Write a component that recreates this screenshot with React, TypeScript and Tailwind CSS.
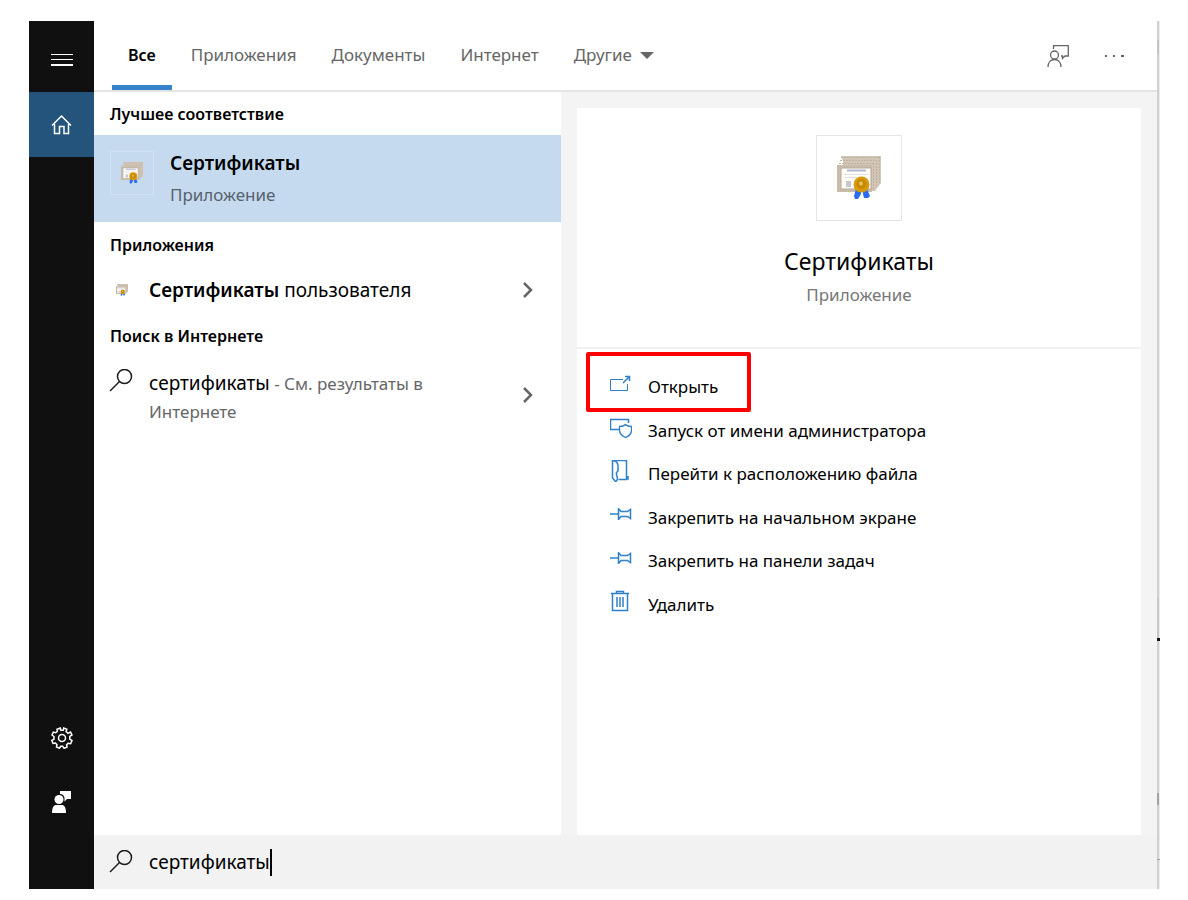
import type { ReactNode } from 'react';

const tabs = ['Все', 'Приложения', 'Документы', 'Интернет'];

function CertificateIcon({ className }: { className: string }) {
    return (
        <svg viewBox="0 0 44 44" className={className} aria-hidden="true">
            <path d="M4 0H44V27L38 35H6V5Z" fill="#d3c6b6" />
            <path
                d="M4 1.5H43M3 4.5H40M2 7.5H37M42.5 1V27M39.5 4V31M36.5 7V34"
                fill="none"
                stroke="#bfb2a2"
                strokeDasharray="2 1"
            />
            <path d="M0 9H35V36H0Z" fill="#cdbfae" />
            <path d="M1 10H34V35H1Z" fill="none" stroke="#bfb1a0" strokeDasharray="1 1" />
            <path d="M4 12H34V33H4Z" fill="#fdfcf7" stroke="#b5a896" />
            <path d="M10 14.5H29" stroke="#b4b6d8" strokeWidth="2" />
            <path d="M7 18.5H31M8 21.5H20" stroke="#dedee8" />
            <path d="M9 25H14V31H9Z" fill="#c6c6d0" />
            <path d="M19 33L17 40L18 43H21L24 38V34Z" fill="#2a6cf0" />
            <path d="M26 34V38L27 42H31L33 40L30 33Z" fill="#2a6cf0" />
            <circle cx="24.5" cy="28.5" r="8" fill="#d69a0a" />
            <circle cx="24.5" cy="28" r="5" fill="#c48a06" />
            <circle cx="24" cy="27.5" r="2" fill="#f0c250" />
        </svg>
    );
}

function SearchIcon() {
    return (
        <svg viewBox="0 0 24 24" className="size-6 shrink-0" fill="none" stroke="#1a1a1a" strokeWidth="1.5" aria-hidden="true">
            <circle cx="15.5" cy="7.5" r="7" />
            <path d="M10.5 12.500L1 22" />
        </svg>
    );
}

function ChevronIcon() {
    return (
        <svg viewBox="0 0 10 16" className="h-4 w-2.5" fill="none" stroke="#666" strokeWidth="2.5" aria-hidden="true">
            <path d="M1 1L8 8L1 15" />
        </svg>
    );
}

function ActionIcon({ children }: { children: ReactNode }) {
    return (
        <svg viewBox="0 0 22 22" className="mb-1.5 size-[22px] shrink-0" fill="none" stroke="#2f80c8" aria-hidden="true">
            {children}
        </svg>
    );
}

const pin = (
    <path d="M0 11H8M8.5 5V17M8.5 5.5L11 8.5H17.5L20.5 6.5V15.5L17.5 13.5H11L8.5 16.5" strokeWidth="1.5" />
);

const actions = [
    {
        label: 'Открыть',
        icon: (
            <>
                <path d="M13 6.5H.5V17.5H17.500V11" />
                <path d="M13 10L19 4M15 3.5H19.5V8" strokeWidth="1.5" />
            </>
        ),
    },
    {
        label: 'Запуск от имени администратора',
        icon: (
            <>
                <path d="M9 13.5H.5V3.5H18.5V7" strokeWidth="1.5" />
                <path
                    d="M15.5 8.5C14 10 12 10.5 9.500 10.500V14C9.500 18 13 20.500 15.500 21.500C18 20.500 21.500 18 21.500 14V10.500C19 10.500 17 10 15.500 8.500Z"
                    strokeWidth="1.3"
                />
            </>
        ),
    },
    {
        label: 'Перейти к расположению файла',
        icon: (
            <>
                <path d="M3 .5H16.500V19.500H8.500M16.500 19H18V16" strokeWidth="1.5" />
                <path d="M2.500 0V18L5.500 21.500C7.500 21 8 18 6.500 15V12.500L8 11V6C8 3 6 1 3 .5" strokeWidth="1.5" />
            </>
        ),
    },
    { label: 'Закрепить на начальном экране', icon: pin },
    { label: 'Закрепить на панели задач', icon: pin },
    {
        label: 'Удалить',
        icon: (
            <>
                <path d="M1 3.5H19M6.5 3V1.5H13.5V3" strokeWidth="1.5" />
                <path d="M2.5 4V20.500H17.5V4M7 7V17M10 7V17M13 7V17" strokeWidth="1.5" />
            </>
        ),
    },
];

function Sidebar() {
    return (
        <nav className="flex w-[65px] shrink-0 flex-col bg-[#101010] text-white">
            <button type="button" aria-label="Меню" className="flex h-[71px] items-center justify-center pt-1.5">
                <svg viewBox="0 0 22 14" className="h-3.5 w-[22px]" stroke="currentColor" shapeRendering="crispEdges">
                    <path d="M0 1.5H22M0 6.5H22" />
                    <path d="M0 12H22" strokeWidth="2" />
                </svg>
            </button>
            <button type="button" aria-label="Главная" className="flex h-[65px] items-center justify-center bg-[#24547c]">
                <svg viewBox="0 0 22 22" className="size-[22px]" fill="none" stroke="currentColor" strokeWidth="1.5">
                    <path d="M1 11.5L10.5 2L20 11.5" />
                    <path d="M3.5 10V19.5H8.5V12.5H13V19.5H17.5V10" />
                </svg>
            </button>
            <button type="button" aria-label="Параметры" className="mt-auto flex h-[65px] items-center justify-center">
                <svg viewBox="0 0 22 22" className="size-[22px]" fill="none" stroke="currentColor" strokeWidth="1.5">
                    <path d="M9.3 1L9.8 3.3H12.2L12.7 1L15.8 2.2L15.1 4.6L17 6.3L19.5 5L21 8L18.8 9.4V12.1L21 13.6L19.7 16.7L17.2 16.2L15.6 17.8L16.1 20.1L13 21.3L11.7 19.2H9.8L8.4 21.2L5.5 20L6 17.7L4.4 16L2 16.5L.8 13.5L3 12.1V9.5L1 8L2.3 5.1L4.7 5.7L6.4 4.2L6 2.2Z" />
                    <circle cx="11" cy="11" r="3.5" />
                </svg>
            </button>
            <button type="button" aria-label="Отзывы" className="mb-[54px] flex h-[65px] items-center justify-center pb-0.5">
                <svg viewBox="0 0 22 22" className="size-[22px]" fill="currentColor">
                    <circle cx="8" cy="8.5" r="4.5" />
                    <path d="M1 22C1 16 3 14 5 14H11C13 14 15 16 15 22Z" />
                    <path d="M9 0H20V8H16L13.5 10.5V7C13 4.5 11.5 3 9 3Z" />
                </svg>
            </button>
        </nav>
    );
}

function Header() {
    return (
        <header className="flex h-[71px] shrink-0 items-stretch border-b-2 border-[#e5e5e5] pl-[18px] text-[17px] text-[#666]">
            {tabs.map((tab, i) => (
                <button
                    key={tab}
                    type="button"
                    className={
                        i === 0
                            ? 'mr-[3px] border-b-[5px] border-[#3583c9] px-4 pt-1 text-base font-semibold text-black'
                            : 'mr-[3px] border-b-[5px] border-transparent px-4 pt-1'
                    }
                >
                    {tab}
                </button>
            ))}
            <button type="button" className="flex items-center gap-2 border-b-[5px] border-transparent px-4 pt-1">
                Другие
                <svg viewBox="0 0 14 7" className="h-[7px] w-3.5" fill="currentColor" aria-hidden="true">
                    <path d="M0 0H14L7 7Z" />
                </svg>
            </button>
            <div className="ml-auto flex items-center gap-9 pr-8">
                <button type="button" aria-label="Отправить отзыв">
                    <svg viewBox="0 0 22 22" className="size-[22px]" fill="none" stroke="currentColor" strokeWidth="1.3">
                        <path d="M6.5 4V.7H21.3V11H18L15.5 13.5V11H14" />
                        <circle cx="7.5" cy="10" r="4" />
                        <path d="M1 22C1 17 4 14.5 7.5 14.5S14 17 14 22" />
                    </svg>
                </button>
                <button type="button" aria-label="Ещё">
                    <svg viewBox="0 0 20 4" className="h-1 w-5" fill="currentColor">
                        <path d="M0 1H2V3H0ZM8 1H10V3H8ZM16 1H19V3H16Z" />
                    </svg>
                </button>
            </div>
        </header>
    );
}

function Results() {
    return (
        <section className="w-[467px] shrink-0 bg-white">
            <h2 className="flex h-[43px] items-center pl-4 text-base font-semibold">Лучшее соответствие</h2>
            <button type="button" className="flex h-[87px] w-full items-start bg-[#c5daef] pt-4 pl-4 text-left">
                <span className="flex size-11 items-center justify-center border border-[#d0e2f4]">
                    <CertificateIcon className="size-[22px]" />
                </span>
                <span className="pl-4">
                    <span className="block text-[19px] leading-6 font-semibold">Сертификаты</span>
                    <span className="mt-2 block text-[17px] leading-6 text-[#57626c]">Приложение</span>
                </span>
            </button>
            <h2 className="flex h-[45px] items-center pl-4 text-base font-semibold">Приложения</h2>
            <button type="button" className="flex h-[46px] w-full items-center pr-7 pl-[22px] text-left text-[19px]">
                <CertificateIcon className="size-3" />
                <span className="flex-1 pl-[21px]">
                    <span className="font-semibold">Сертификаты</span> пользователя
                </span>
                <ChevronIcon />
            </button>
            <h2 className="flex h-[46px] items-center pl-4 text-base font-semibold">Поиск в Интернете</h2>
            <button type="button" className="flex w-full items-start pt-2.5 pr-7 pl-[15px] text-left">
                <SearchIcon />
                <span className="flex-1 pr-16 pl-4 text-[17px] leading-7 text-[#666]">
                    <span className="text-[19px] text-black">сертификаты</span> - См. результаты в Интернете
                </span>
                <span className="self-center pb-1.5">
                    <ChevronIcon />
                </span>
            </button>
        </section>
    );
}

function Details() {
    return (
        <section className="flex flex-1 bg-[#f4f4f4] px-4 pt-4">
            <div className="flex-1 bg-white">
                <div className="flex h-[241px] flex-col items-center border-b-2 border-[#f2f2f2] pt-[27px]">
                    <span className="flex size-[86px] items-center justify-center border border-[#e5e5e5]">
                        <CertificateIcon className="size-11" />
                    </span>
                    <h1 className="mt-6 text-[23px] leading-8">Сертификаты</h1>
                    <p className="mt-1.5 text-[17px] leading-6 text-[#777]">Приложение</p>
                </div>
                <ul className="relative mt-4 grid h-[261px] auto-rows-fr pl-[33px] text-[17px]">
                    {actions.map((action) => (
                        <li key={action.label} className="flex">
                            <button type="button" className="flex items-center gap-4 text-left">
                                <ActionIcon>{action.icon}</ActionIcon>
                                {action.label}
                            </button>
                        </li>
                    ))}
                    <li aria-hidden="true" className="pointer-events-none absolute -top-[13px] left-[9px] h-[60px] w-[165px] rounded-xs border-4 border-[#ff0000]" />
                </ul>
            </div>
        </section>
    );
}

function SearchBar() {
    return (
        <label className="flex h-[54px] shrink-0 items-center bg-[#f2f2f2] pl-[15px]">
            <SearchIcon />
            <input
                type="text"
                aria-label="Поиск"
                defaultValue="сертификаты"
                className="ml-4 field-sizing-content text-[19px] caret-transparent outline-none"
            />
            <span className="h-[27px] w-0.5 bg-black" />
        </label>
    );
}

function App() {
    return (
        <div className="flex min-h-screen bg-white pt-[21px] pr-7 pb-[11px] pl-[29px] font-['Noto_Sans','Open_Sans',sans-serif] text-base text-black">
            <Sidebar />
            <main className="flex flex-1 flex-col">
                <Header />
                <div className="flex flex-1">
                    <Results />
                    <Details />
                </div>
                <SearchBar />
            </main>
            <div className="flex w-[3px] flex-col border-r border-[#ededed] bg-[#d0d0d0]">
                <span className="mt-[19px] h-3.5 bg-[#c4c4c4]" />
                <span className="mt-auto h-10 bg-[#c6c6c6]" />
                <span className="-mr-px h-[3px] bg-[#111]" />
                <span className="mt-[152px] h-3 bg-[#a3a3a3]" />
                <span className="-mr-px mt-[54px] mb-[29px] h-px bg-[#a3a3a3]" />
            </div>
        </div>
    );
}

export default App;
